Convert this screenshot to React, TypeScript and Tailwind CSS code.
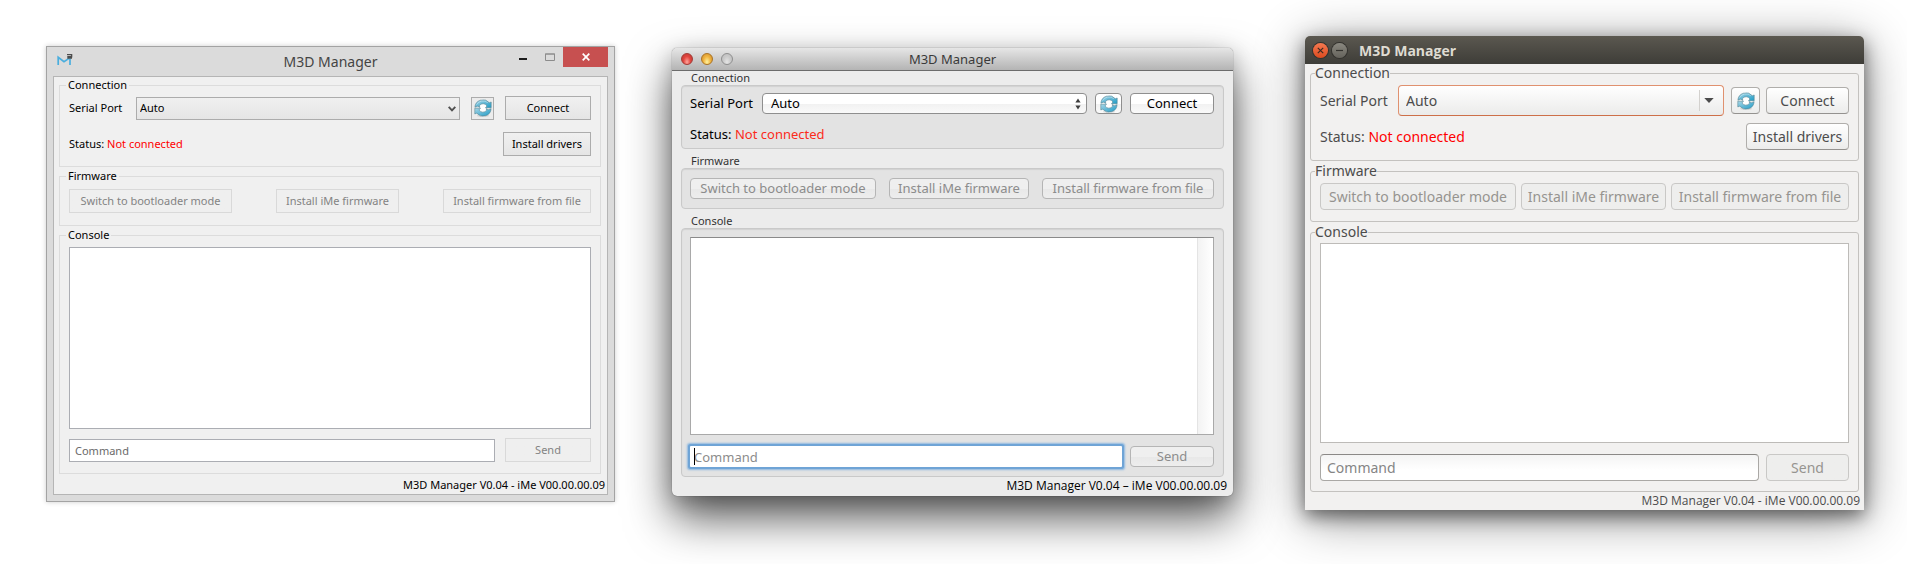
import React, { useId } from "react";
import type { ReactNode } from "react";

const VERSION = "M3D Manager V0.04 - iMe V00.00.00.09";

function RefreshIcon() {
  const id = useId();
  return (
    <svg viewBox="0 0 18 18" className="block h-[18px] w-[18px] shrink-0" aria-hidden="true">
      <defs>
        <linearGradient id={id} x1="0" y1="0" x2="1" y2="1">
          <stop offset="0" stopColor="#a9d8e8" />
          <stop offset="0.5" stopColor="#62b8d6" />
          <stop offset="1" stopColor="#1f9cc6" />
        </linearGradient>
      </defs>
      <ellipse cx="9" cy="16.8" rx="6" ry="1" fill="#000" opacity="0.12" />
      <circle cx="9" cy="9" r="4.500" fill="#fff" />
      <g fill={`url(#${id})`} stroke="#5b8794" strokeWidth="0.6" strokeLinejoin="round">
        <path d="M.9 8.200A8.100 7.700 0 0 1 15.300 3.700L17.200 3V8.700H11.500L12.900 7A4.300 4.100 0 0 0 5.400 6.700L5.800 8.400 3.600 7.200Z" />
        <path d="M17.100 9.700A8.100 7.700 0 0 1 2.700 14.200L.8 14.900V9.200H6.500L5.100 10.900A4.300 4.100 0 0 0 12.600 11.200L12.200 9.500 14.400 10.700Z" />
      </g>
      <path d="M2.700 5.600A7 6.500 0 0 1 13.800 3.700" fill="none" stroke="#e0f2f8" strokeWidth="0.8" opacity="0.6" />
    </svg>
  );
}

function AppLogo() {
  return (
    <svg viewBox="0 0 16 14" className="block h-[14px] w-4" aria-hidden="true">
      <path d="M1.200 12V4.300L7 8.700 12 5.400M13 12V5.500" fill="none" stroke="#4aaede" strokeWidth="1.700" />
      <path d="M10 1.600h4.600v2.200H11v1.300h4" fill="none" stroke="#4d4d4d" strokeWidth="1.400" />
    </svg>
  );
}

type GroupProps = { title: string; children: ReactNode };

/* ---------- Windows ---------- */

const winBtn =
  "h-6 border border-[#acacac] bg-linear-to-b from-[#f0f0f0] to-[#e5e5e5] whitespace-nowrap text-black disabled:border-[#d9d9d9] disabled:from-[#efefef] disabled:to-[#efefef] disabled:text-[#838383]";

function WinGroup({ title, children }: GroupProps) {
  return (
    <fieldset className="min-w-0 border border-[#dcdcdc] px-[6px]">
      <legend className="h-4 px-[2px] leading-4">{title}</legend>
      <div className="px-[3px]">{children}</div>
    </fieldset>
  );
}

function WindowsWindow() {
  return (
    <section
      aria-label="M3D Manager on Windows"
      className="col-start-1 mt-[46px] min-w-0 border border-[#a3a3a3] bg-[#dbdbdb] px-[6px] pb-[6px] font-['Noto_Sans','Open_Sans',sans-serif] text-[11px] text-black shadow-[0_0_5px_rgba(0,0,0,0.2)]"
    >
      <header className="grid h-[29px] grid-cols-[1fr_auto_1fr]">
        <div className="pt-[6px] pl-1">
          <AppLogo />
        </div>
        <h1 className="pt-[5px] text-[14px] leading-5 text-[#444]">M3D Manager</h1>
        <div className="flex items-start justify-end">
          <button aria-label="Minimize" className="flex h-5 w-[27px] items-center justify-center">
            <svg viewBox="0 0 8 8" className="h-2 w-2"><path d="M0 5h8v2H0z" fill="#1c1c1c" /></svg>
          </button>
          <button aria-label="Maximize" className="flex h-5 w-[27px] items-center justify-center">
            <svg viewBox="0 0 10 8" className="h-2 w-[10px]"><path d="M.5 1h9v6.500h-9zM0 1h10" fill="none" stroke="#8c8c8c" /></svg>
          </button>
          <button aria-label="Close" className="flex h-5 w-[45px] items-center justify-center bg-[#c75050]">
            <svg viewBox="0 0 8 8" className="h-2 w-2"><path d="M.7.7l6.600 6.600M7.300.7L.7 7.300" stroke="#fff" strokeWidth="1.700" /></svg>
          </button>
        </div>
      </header>
      <div className="flex flex-col border border-[#b5b5b5] bg-[#f0f0f0]">
        <div className="flex flex-col gap-px pr-[6px] pl-[5px]">
          <WinGroup title="Connection">
            <div className="flex items-center pt-[3px]">
              <label htmlFor="win-port" className="w-[67px] shrink-0">Serial Port</label>
              <div className="relative flex-1">
                <select id="win-port" className="block h-[23px] w-full appearance-none border border-[#acacac] bg-linear-to-b from-[#f0f0f0] to-[#e5e5e5] px-[3px]">
                  <option>Auto</option>
                </select>
                <svg viewBox="0 0 8 6" className="pointer-events-none absolute top-[9px] right-1 h-[6px] w-2"><path d="M.7.8L4 4.300 7.300.8" fill="none" stroke="#505050" strokeWidth="1.900" /></svg>
              </div>
              <button aria-label="Refresh ports" className="ml-[11px] flex h-[23px] w-[23px] items-center justify-center border border-[#acacac] bg-[#ececec]">
                <RefreshIcon />
              </button>
              <button className={`${winBtn} ml-[11px] w-[86px]`}>Connect</button>
            </div>
            <div className="flex items-center justify-between pt-3 pb-[10px]">
              <p>Status: <span className="text-[#ff0000]">Not connected</span></p>
              <button className={`${winBtn} w-[88px]`}>Install drivers</button>
            </div>
          </WinGroup>
          <WinGroup title="Firmware">
            <div className="flex justify-between pt-[5px] pb-3">
              <button disabled className={`${winBtn} w-[163px]`}>Switch to bootloader mode</button>
              <button disabled className={`${winBtn} w-[123px]`}>Install iMe firmware</button>
              <button disabled className={`${winBtn} w-[148px]`}>Install firmware from file</button>
            </div>
          </WinGroup>
          <WinGroup title="Console">
            <div className="pt-1 pb-[11px]">
              <textarea aria-label="Console output" readOnly className="block h-[182px] w-full resize-none border border-[#abadb3] bg-white" />
              <div className="flex items-center gap-[10px] pt-[9px]">
                <input aria-label="Command" placeholder="Command" className="h-[23px] min-w-0 flex-1 border border-[#abadb3] bg-white px-[5px] placeholder:text-[#6a6a6a]" />
                <button disabled className={`${winBtn} w-[86px]`}>Send</button>
              </div>
            </div>
          </WinGroup>
        </div>
        <footer className="h-5 pr-[2px] text-right leading-[22px]">{VERSION}</footer>
      </div>
    </section>
  );
}

/* ---------- Mac ---------- */

const macBtn =
  "h-[21px] rounded-[4px] border border-[#8f8f8f] bg-linear-to-b from-white from-50% via-[#f1f1f1] via-50% to-[#fafafa] leading-[19px] whitespace-nowrap text-black disabled:border-[#b5b5b5] disabled:from-[#efefef] disabled:via-[#e8e8e8] disabled:to-[#ededed] disabled:text-[#8c8c8c]";

function MacGroup({ title, children }: GroupProps) {
  return (
    <fieldset className="min-w-0">
      <legend className="h-[14px] px-[10px] text-[11px] leading-[14px] text-[#333]">{title}</legend>
      <div className="rounded-[4px] border border-[#c9c9c9] bg-[#e3e3e3] pr-[9px] pl-2 shadow-[inset_0_1px_1px_rgba(0,0,0,0.08)]">{children}</div>
    </fieldset>
  );
}

function MacWindow() {
  return (
    <section
      aria-label="M3D Manager on Mac"
      className="col-start-3 mt-12 min-w-0 rounded-[5px] bg-[#ececec] font-['Noto_Sans','Open_Sans',sans-serif] text-[13px] text-black shadow-[0_0_1px_rgba(0,0,0,0.7),0_6px_20px_rgba(0,0,0,0.2),0_22px_45px_rgba(0,0,0,0.65)]"
    >
      <header className="grid h-[23px] grid-cols-[1fr_auto_1fr] items-center rounded-t-[5px] border-b border-[#6c6c6c] bg-linear-to-b from-[#e6e6e6] to-[#b4b4b4] px-[9px]">
        <div className="flex gap-2">
          <button aria-label="Close" className="h-3 w-3 rounded-full border border-[#a33a35] bg-radial-[at_50%_80%] from-[#ffa59c] via-[#e2463f] to-[#b83832]" />
          <button aria-label="Minimize" className="h-3 w-3 rounded-full border border-[#ab7323] bg-radial-[at_50%_80%] from-[#fff3a0] via-[#f0b440] to-[#cc8a2c]" />
          <button aria-label="Zoom" disabled className="h-3 w-3 rounded-full border border-[#8f8f8f] bg-radial-[at_50%_80%] from-[#e5e5e5] via-[#cacaca] to-[#bababa]" />
        </div>
        <h1 className="leading-5 text-[#3a3a3a]">M3D Manager</h1>
      </header>
      <div className="flex flex-col gap-[5px] px-[9px]">
        <MacGroup title="Connection">
          <div className="flex items-center pt-[7px]">
            <label htmlFor="mac-port" className="w-[72px] shrink-0">Serial Port</label>
            <div className="relative flex-1">
              <select id="mac-port" className={`${macBtn} block w-full appearance-none px-2`}>
                <option>Auto</option>
              </select>
              <svg viewBox="0 0 6 12" className="pointer-events-none absolute top-[5px] right-[6px] h-3 w-[6px]"><path d="M3 .5L5.600 4.500H.4zM3 11.500L5.600 7.500H.4z" fill="#3c3c3c" /></svg>
            </div>
            <button aria-label="Refresh ports" className={`${macBtn} ml-2 flex w-[27px] items-center justify-center`}>
              <RefreshIcon />
            </button>
            <button className={`${macBtn} ml-2 w-[84px]`}>Connect</button>
          </div>
          <p className="pt-[10px] pb-[3px] leading-[21px]">Status: <span className="text-[#fb2b1b]">Not connected</span></p>
        </MacGroup>
        <MacGroup title="Firmware">
          <div className="flex justify-between py-[9px]">
            <button disabled className={`${macBtn} w-[186px]`}>Switch to bootloader mode</button>
            <button disabled className={`${macBtn} w-[140px]`}>Install iMe firmware</button>
            <button disabled className={`${macBtn} w-[172px]`}>Install firmware from file</button>
          </div>
        </MacGroup>
        <MacGroup title="Console">
          <div className="pt-2 pb-[9px]">
            <div className="flex h-[198px] border border-[#a9a9a9] border-t-[#8a8a8a] bg-white">
              <textarea aria-label="Console output" readOnly className="block min-w-0 flex-1 resize-none" />
              <div className="w-4 border-l border-[#e4e4e4] bg-linear-to-r from-[#f3f3f3] to-white" />
            </div>
            <div className="flex items-center gap-2 pt-[11px]">
              <div className="relative flex-1">
                <input aria-label="Command" placeholder="Command" className="block h-[21px] w-full rounded-[1px] bg-white px-1 shadow-[0_0_0_2px_#6fa4d6,0_0_2px_3px_#8db8e0] placeholder:text-[#8c8c8c]" />
                <span className="absolute top-[2px] left-1 h-[17px] w-px bg-black" />
              </div>
              <button disabled className={`${macBtn} w-[84px]`}>Send</button>
            </div>
          </div>
        </MacGroup>
      </div>
      <footer className="h-[19px] pr-[6px] text-right font-['Open_Sans','Noto_Sans',sans-serif] text-[12px] leading-[18px]">{VERSION.replace("-", "–")}</footer>
    </section>
  );
}

/* ---------- Ubuntu ---------- */

const ubuBtn =
  "h-[27px] rounded-[4px] border border-[#b0aeab] border-b-[#94928f] bg-linear-to-b from-white to-[#ececeb] leading-[25px] whitespace-nowrap text-[#4c4c4c] disabled:border-[#c9c8c6] disabled:from-[#eeeeed] disabled:to-[#eeeeed] disabled:text-[#969490]";

function UbuntuGroup({ title, children }: GroupProps) {
  return (
    <fieldset className="min-w-0 rounded-[3px] border border-[#c4c2bf] px-1">
      <legend className="h-[19px] leading-[17px]">{title}</legend>
      <div className="px-[5px]">{children}</div>
    </fieldset>
  );
}

function UbuntuWindow() {
  return (
    <section
      aria-label="M3D Manager on Ubuntu"
      className="col-start-5 mt-9 min-w-0 rounded-t-[5px] bg-[#f2f1f0] font-['Noto_Sans','Open_Sans',sans-serif] text-[14px] text-[#4c4c4c] shadow-[0_6px_18px_rgba(0,0,0,0.5),0_8px_50px_rgba(0,0,0,0.45)]"
    >
      <header className="flex h-7 items-center rounded-t-[5px] bg-linear-to-b from-[#5b5850] to-[#3e3d38] pl-2">
        <button aria-label="Close" className="flex h-[15px] w-[15px] items-center justify-center rounded-full bg-linear-to-b from-[#f4784f] to-[#dd4a1d] shadow-[0_0_0_1px_#33322e]">
          <svg viewBox="0 0 7 7" className="h-[7px] w-[7px]"><path d="M.8.8l5.400 5.400M6.200.8L.8 6.200" stroke="#3b2a22" strokeWidth="1.200" /></svg>
        </button>
        <button aria-label="Minimize" className="ml-1 flex h-[15px] w-[15px] items-center justify-center rounded-full bg-linear-to-b from-[#8a8880] to-[#65635c] shadow-[0_0_0_1px_#33322e]">
          <svg viewBox="0 0 7 7" className="h-[7px] w-[7px]"><path d="M0 3.500h7" stroke="#33322e" strokeWidth="1.200" /></svg>
        </button>
        <h1 className="ml-3 font-['Open_Sans','Noto_Sans',sans-serif] font-bold text-[#dfdbd2]">M3D Manager</h1>
      </header>
      <div className="flex flex-col gap-px px-[5px]">
        <UbuntuGroup title="Connection">
          <div className="flex items-center pt-[2px]">
            <label htmlFor="ubu-port" className="w-[78px] shrink-0">Serial Port</label>
            <div className="relative flex-1">
              <select id="ubu-port" className="block h-[31px] w-full appearance-none rounded-[4px] border border-[#e0916f] border-b-[#cd6f49] bg-linear-to-b from-white to-[#ebebea] px-[7px]">
                <option>Auto</option>
              </select>
              <span className="pointer-events-none absolute top-[5px] right-6 h-[21px] w-px bg-[#d3d1ce]" />
              <svg viewBox="0 0 10 5" className="pointer-events-none absolute top-[13px] right-[10px] h-[5px] w-[10px]"><path d="M.3 0h9.400L5 5z" fill="#4c4c4c" /></svg>
            </div>
            <button aria-label="Refresh ports" className={`${ubuBtn} ml-[7px] flex w-[29px] items-center justify-center`}>
              <RefreshIcon />
            </button>
            <button className={`${ubuBtn} ml-[6px] w-[83px]`}>Connect</button>
          </div>
          <div className="flex items-center justify-between pt-[7px] pb-[10px]">
            <p>Status: <span className="text-[#ff0000]">Not connected</span></p>
            <button className={`${ubuBtn} w-[103px]`}>Install drivers</button>
          </div>
        </UbuntuGroup>
        <UbuntuGroup title="Firmware">
          <div className="flex justify-between pt-[2px] pb-[11px]">
            <button disabled className={`${ubuBtn} w-[196px]`}>Switch to bootloader mode</button>
            <button disabled className={`${ubuBtn} w-[145px]`}>Install iMe firmware</button>
            <button disabled className={`${ubuBtn} w-[178px]`}>Install firmware from file</button>
          </div>
        </UbuntuGroup>
        <UbuntuGroup title="Console">
          <div className="pt-px pb-[10px]">
            <textarea aria-label="Console output" readOnly className="block h-[200px] w-full resize-none border border-[#bdbbb8] bg-white" />
            <div className="flex gap-[7px] pt-[11px]">
              <input aria-label="Command" placeholder="Command" className="h-[27px] min-w-0 flex-1 rounded-[4px] border border-[#aaa8a5] border-t-[#8b8987] bg-linear-to-b from-[#f4f4f4] to-white to-60% px-[6px] placeholder:text-[#858585]" />
              <button disabled className={`${ubuBtn} w-[83px]`}>Send</button>
            </div>
          </div>
        </UbuntuGroup>
      </div>
      <footer className="h-[18px] pr-1 text-right font-['Open_Sans','Noto_Sans',sans-serif] text-[12px] leading-[18px]">{VERSION}</footer>
    </section>
  );
}

export default function App() {
  return (
    <main className="grid min-h-screen grid-cols-[569fr_57px_561fr_72px_559fr] items-start overflow-hidden bg-white pr-[43px] pl-[46px]">
      <WindowsWindow />
      <MacWindow />
      <UbuntuWindow />
    </main>
  );
}
